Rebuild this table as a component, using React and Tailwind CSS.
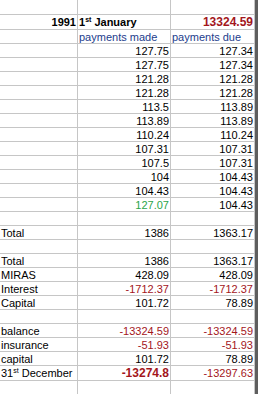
import React from 'react';

const RED = 'text-[#a3161c]';

// each row: [label, made, due]; cells may be strings or { v, cls }
const rows = [
  { h: 'h-[15px]' },
  {
    h: 'h-[15px]',
    a: { v: '1991', cls: 'font-bold text-right' },
    b: { v: 'jan', cls: 'font-bold' },
    c: { v: '13324.59', cls: `font-bold text-right text-[12px] ${RED}` },
  },
  {
    b: { v: 'payments made', cls: 'text-[#1c3c8c]' },
    c: { v: 'payments due', cls: 'text-[#1c3c8c]' },
  },
  ...[
    ['127.75', '127.34'],
    ['127.75', '127.34'],
    ['121.28', '121.28'],
    ['121.28', '121.28'],
    ['113.5', '113.89'],
    ['113.89', '113.89'],
    ['110.24', '110.24'],
    ['107.31', '107.31'],
    ['107.5', '107.31'],
    ['104', '104.43'],
    ['104.43', '104.43'],
  ].map(([m, d]) => ({ b: { v: m, cls: 'text-right' }, c: { v: d, cls: 'text-right' } })),
  { b: { v: '127.07', cls: 'text-right text-[#2aa44a]' }, c: { v: '104.43', cls: 'text-right' } },
  {},
  { a: { v: 'Total' }, b: { v: '1386', cls: 'text-right' }, c: { v: '1363.17', cls: 'text-right' } },
  {},
  { a: { v: 'Total' }, b: { v: '1386', cls: 'text-right' }, c: { v: '1363.17', cls: 'text-right' } },
  { a: { v: 'miras' }, b: { v: '428.09', cls: 'text-right' }, c: { v: '428.09', cls: 'text-right' } },
  {
    a: { v: 'Interest' },
    b: { v: '-1712.37', cls: `text-right ${RED}` },
    c: { v: '-1712.37', cls: `text-right ${RED}` },
  },
  { a: { v: 'Capital' }, b: { v: '101.72', cls: 'text-right' }, c: { v: '78.89', cls: 'text-right' } },
  {},
  {
    a: { v: 'balance' },
    b: { v: '-13324.59', cls: `text-right ${RED}` },
    c: { v: '-13324.59', cls: `text-right ${RED}` },
  },
  {
    a: { v: 'insurance' },
    b: { v: '-51.93', cls: `text-right ${RED}` },
    c: { v: '-51.93', cls: `text-right ${RED}` },
  },
  { a: { v: 'capital' }, b: { v: '101.72', cls: 'text-right' }, c: { v: '78.89', cls: 'text-right' } },
  {
    h: 'h-[15px]',
    a: { v: 'dec' },
    b: { v: '-13274.8', cls: `font-bold text-right text-[12px] ${RED}` },
    c: { v: '-13297.63', cls: `text-right ${RED}` },
  },
  {},
];

function Content({ v }) {
  if (v === 'jan')
    return (
      <>
        1<span className="relative -top-[4px] text-[7px]">st</span> January
      </>
    );
  if (v === 'dec')
    return (
      <>
        31<span className="relative -top-[4px] text-[7px]">st</span> December
      </>
    );
  if (v === 'miras')
    return <span className="underline decoration-wavy decoration-[#e02020] decoration-1 underline-offset-2">MIRAS</span>;
  return v;
}

function Cell({ cell, w }) {
  return (
    <div className={`${w} h-full shrink-0 border-r border-[#c6c6c6] overflow-hidden whitespace-nowrap px-[1px] pt-[1px] leading-[13px] ${cell?.cls ?? ''}`}>
      {cell ? <Content v={cell.v} /> : null}
    </div>
  );
}

export default function App() {
  return (
    <div className="w-[258px] h-[394px] overflow-hidden bg-white flex text-[11px] text-black" style={{ fontFamily: '"Liberation Sans", Arial, sans-serif' }}>
      <div className="flex flex-col w-[255px]">
        {rows.map((r, i) => (
          <div key={i} className={`flex ${r.h ?? 'h-[14px]'} shrink-0 border-b border-[#c6c6c6]`}>
            <Cell cell={r.a} w="w-[78px]" />
            <Cell cell={r.b} w="w-[93px]" />
            <Cell cell={r.c} w="w-[84px]" />
          </div>
        ))}
      </div>
      <div className="w-[3px] bg-[#5e5e5e]" />
    </div>
  );
}
